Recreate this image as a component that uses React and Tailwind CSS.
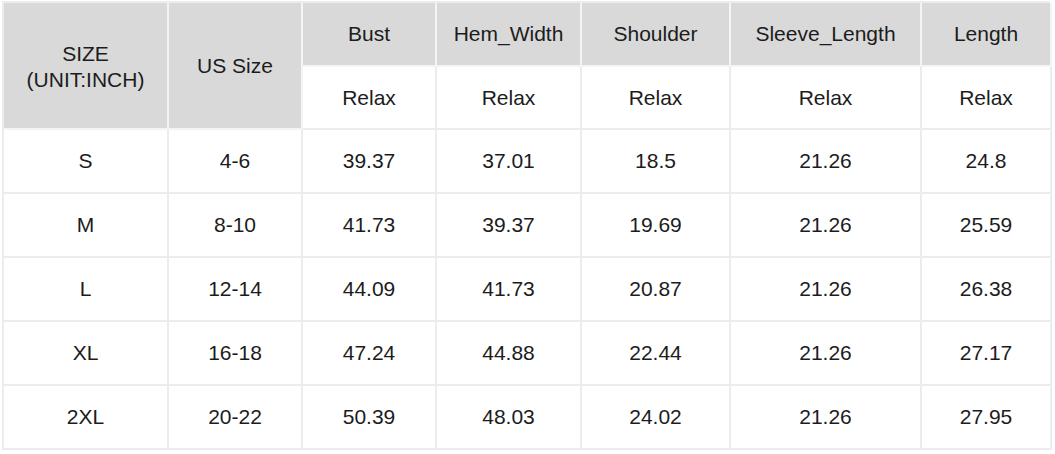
export default function App() {
  const cols = ["Bust", "Hem_Width", "Shoulder", "Sleeve_Length", "Length"];
  const rows = [
    ["S", "4-6", "39.37", "37.01", "18.5", "21.26", "24.8"],
    ["M", "8-10", "41.73", "39.37", "19.69", "21.26", "25.59"],
    ["L", "12-14", "44.09", "41.73", "20.87", "21.26", "26.38"],
    ["XL", "16-18", "47.24", "44.88", "22.44", "21.26", "27.17"],
    ["2XL", "20-22", "50.39", "48.03", "24.02", "21.26", "27.95"],
  ];
  const cell = "flex items-center justify-center text-center border-r-2 border-b-2 border-[#ececec]";
  const head = "flex items-center justify-center text-center border-r-2 border-b-2 border-[#f4f4f4] bg-[#d9d9d9]";
  return (
    <div className="w-[1055px] h-[454px] bg-white pl-[2px] pt-[1px]" style={{ fontFamily: '"Liberation Sans", Arial, sans-serif' }}>
      <div
        className="grid w-[1048px] grid-cols-[165px_134px_134px_145px_149px_191px_130px] grid-rows-[64px_63px_64px_64px_64px_64px_64px] border-l-2 border-t-2 border-[#ececec] text-[21px] text-[#1c1c1c] leading-[26px]"
      >
        <div className={`${head} row-span-2`}>
          <span className="pt-[2px]">SIZE<br />(UNIT:INCH)</span>
        </div>
        <div className={`${head} row-span-2`}>US Size</div>
        {cols.map((c) => (
          <div key={c} className={head}>{c}</div>
        ))}
        {cols.map((c) => (
          <div key={c + "r"} className={cell}>Relax</div>
        ))}
        {rows.map((r, i) =>
          r.map((v, j) => (
            <div key={i + "-" + j} className={cell}>{v}</div>
          ))
        )}
      </div>
    </div>
  );
}
